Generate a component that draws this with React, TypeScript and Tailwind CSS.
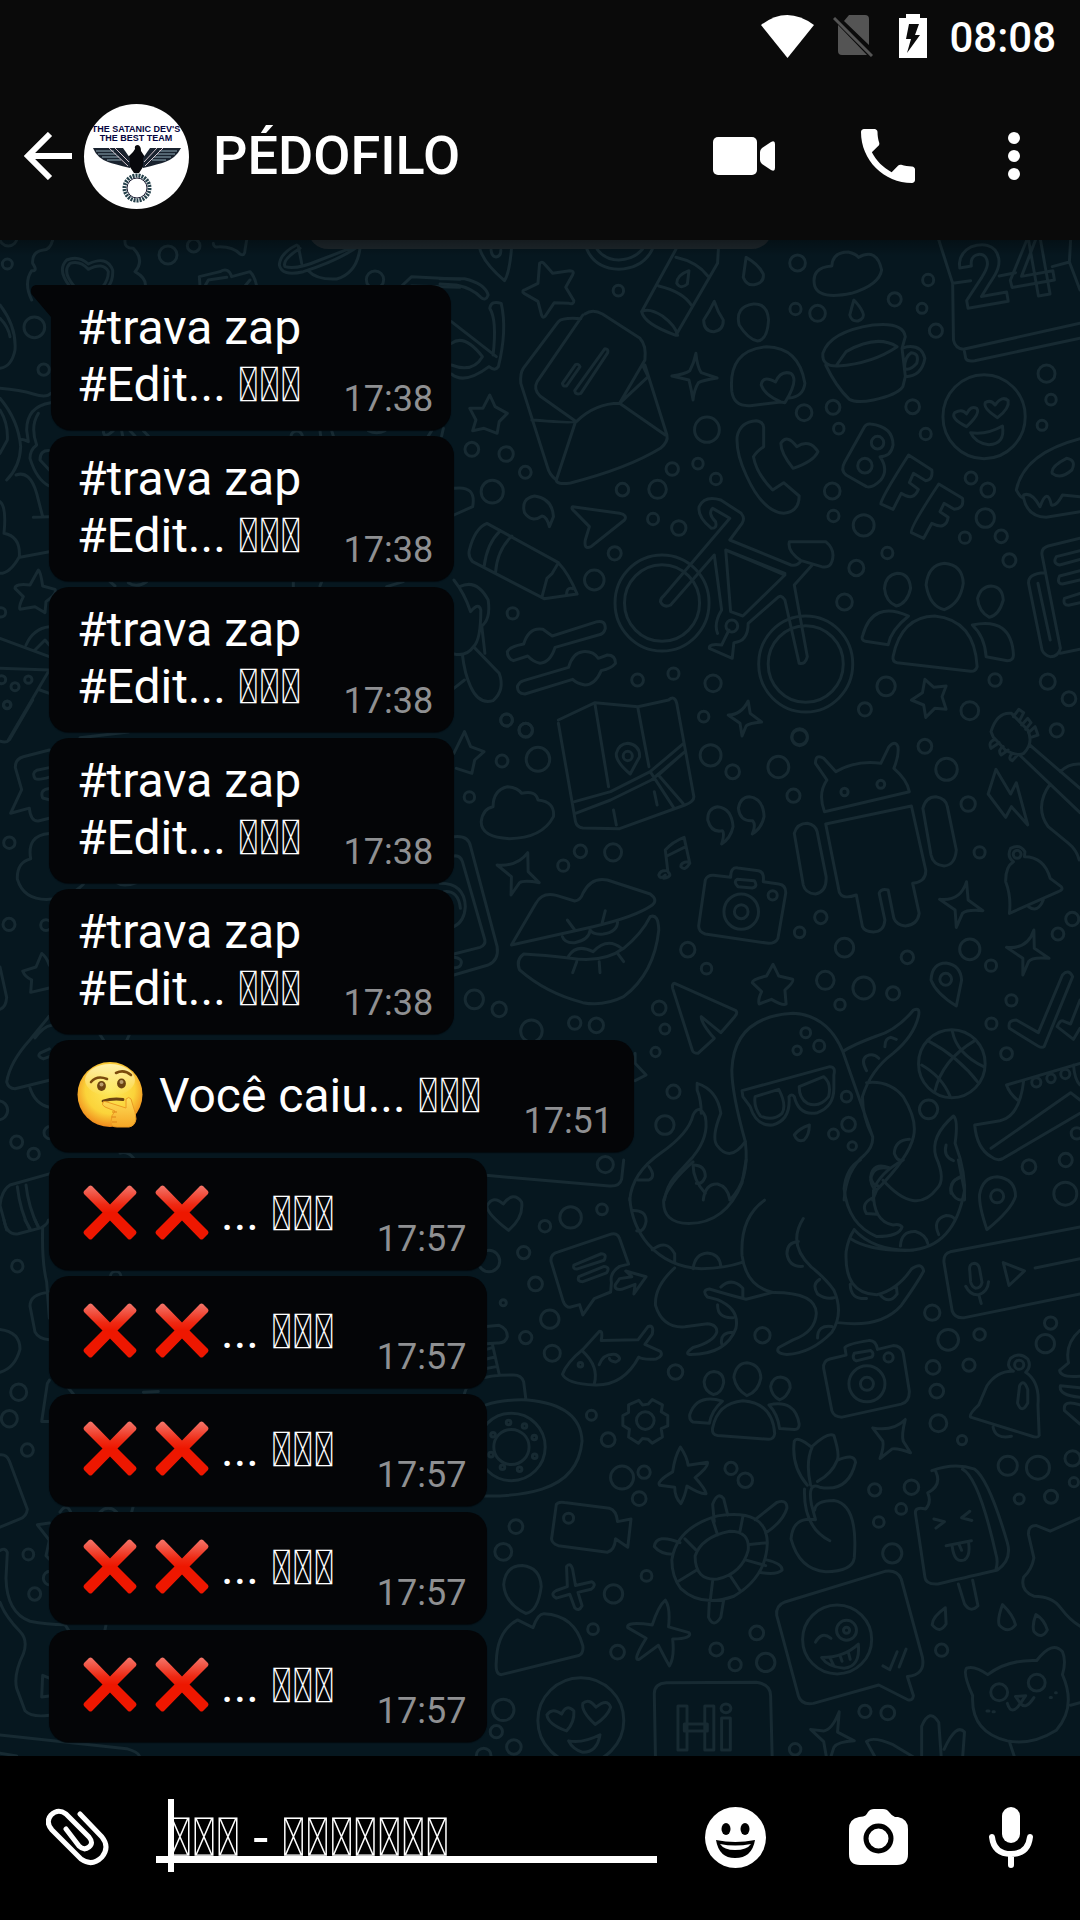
import React from 'react';

const BOX = '\ue000';
const BOX3 = BOX.repeat(3);

/* ---------- Icons ---------- */

function ThinkingFace() {
  return (
    <svg viewBox="0 0 66 66" className="h-[66px] w-[66px] shrink-0" role="img" aria-label="🤔">
      <defs>
        <radialGradient id="face" cx="50%" cy="42%" r="58%">
          <stop offset="0" stopColor="#fde95a" />
          <stop offset="0.65" stopColor="#fbd33a" />
          <stop offset="1" stopColor="#f08a1c" />
        </radialGradient>
        <linearGradient id="shine" x1="0" y1="0" x2="0" y2="1">
          <stop offset="0" stopColor="#fff3b0" stopOpacity="0.95" />
          <stop offset="1" stopColor="#fff3b0" stopOpacity="0" />
        </linearGradient>
        <linearGradient id="hand" x1="0" y1="0" x2="0" y2="1">
          <stop offset="0" stopColor="#fee05a" />
          <stop offset="1" stopColor="#f6a726" />
        </linearGradient>
      </defs>
      <circle cx="33" cy="32.500" r="32.500" fill="url(#face)" />
      <ellipse cx="33" cy="18" rx="25" ry="16" fill="url(#shine)" />
      <path d="M14 20 Q20 13 30 17" fill="none" stroke="#7a4a0c" strokeWidth="2.600" strokeLinecap="round" />
      <path d="M39 11 Q47 7 54 13" fill="none" stroke="#7a4a0c" strokeWidth="2.600" strokeLinecap="round" />
      <ellipse cx="24.500" cy="24" rx="4.400" ry="5" fill="#6b4210" />
      <ellipse cx="44.500" cy="21.500" rx="4.400" ry="5" fill="#6b4210" />
      <circle cx="24.500" cy="22.500" r="2" fill="#b89a6c" />
      <circle cx="44.500" cy="20" r="2" fill="#b89a6c" />
      <path d="M26 39 Q36 36 46 37.500" fill="none" stroke="#6b4210" strokeWidth="2.800" strokeLinecap="round" />
      <path
        d="M26 40 Q24 43 28 45 L38 49 Q34 53 34 60 Q34 65 40 65 L52 65 Q58 64 59 57 L58 50 Q56 44 54 37 Q52 34 49 37 L49 46 L30 40 Q27 39 26 40 Z"
        fill="url(#hand)"
        stroke="#ec9a22"
        strokeWidth="1"
      />
      <path d="M35 50 H40 M34.500 55 H39 M35 60 H40" stroke="#dd8418" strokeWidth="1.200" />
    </svg>
  );
}

function CrossMark() {
  return (
    <svg viewBox="0 0 66 66" className="h-[66px] w-[66px] shrink-0" role="img" aria-label="❌">
      <defs>
        <linearGradient id="cross" x1="0" y1="0" x2="0" y2="1">
          <stop offset="0" stopColor="#f4766a" />
          <stop offset="0.35" stopColor="#ee2a14" />
          <stop offset="0.5" stopColor="#ee1700" />
          <stop offset="1" stopColor="#ee1700" />
        </linearGradient>
      </defs>
      <path
        d="M12 6 Q13.500 5 15 6 L33 24.500 L51 6 Q52.500 5 54 6 L59 11 Q60 12.500 59 14 L40.500 32.500 L59 51 Q60 52.500 59 54 L54 59 Q52.500 60 51 59 L33 40.500 L15 59 Q13.500 60 12 59 L7 54 Q6 52.500 7 51 L25.500 32.500 L7 14 Q6 12.500 7 11 Z"
        fill="url(#cross)"
      />
    </svg>
  );
}

function Avatar() {
  return (
    <svg viewBox="0 0 105 105" className="h-[105px] w-[105px] shrink-0 rounded-full bg-white" role="img" aria-label="Foto do perfil">
      <g fontFamily="'Liberation Sans', sans-serif" fontWeight="700" textAnchor="middle" fill="#050540">
        <text x="52" y="28" fontSize="9">THE SATANIC DEV'S</text>
        <text x="52" y="37" fontSize="9">THE BEST TEAM</text>
      </g>
      <path d="M51 45 Q50 41 54 41 Q57 42 57 47 L61 53 L59 63 L55 69 H50 L46 63 L44 53 L49 48 Z" fill="#08080c" />
      <path d="M9 44 H39 L46 54 L46 64 Q30 60 24 58 Q13 54 9 44 Z" fill="#19222e" />
      <path d="M97 44 H66 L59 54 L59 64 Q75 60 81 58 Q92 54 97 44 Z" fill="#19222e" />
      <path d="M12 47 H30 M14 50 H32 M18 53 H35 M23 56 H37 M93 47 H75 M91 50 H73 M87 53 H70 M82 56 H68" stroke="#8fa9b5" strokeWidth="1" />
      <path d="M25 44 L44 62 M31 44 L45 58 M79 44 L61 62 M73 44 L60 58" stroke="#d6c6cf" strokeWidth="1" />
      <circle cx="53" cy="84" r="12.500" fill="none" stroke="#24404a" strokeWidth="4" strokeDasharray="2 1" />
      <circle cx="53" cy="84" r="10" fill="none" stroke="#1a1a30" strokeWidth="1" />
    </svg>
  );
}

/* ---------- Wallpaper ---------- */

type Dot = [number, number, number];

function Dots({ items, ratio }: { items: Dot[]; ratio: number }) {
  return (
    <>
      {items.map(([x, y, r], i) => (
        <ellipse key={i} cx={x} cy={y} rx={r * ratio} ry={r} vectorEffect="non-scaling-stroke" />
      ))}
    </>
  );
}

function Lines({ items }: { items: string[] }) {
  return (
    <>
      {items.map((d, i) => (
        <path key={i} d={d} vectorEffect="non-scaling-stroke" />
      ))}
    </>
  );
}

const upperDots: Dot[] = [
  [876, 69, 24], [437, 152, 16], [1196, 120, 17], [1114, 178, 20], [1181, 205, 15], [871, 207, 17], [925, 220, 24],
  [1215, 272, 20], [1486, 401, 26], [1497, 479, 16], [1475, 556, 15], [1158, 500, 21], [1190, 582, 17], [963, 502, 21],
  [892, 518, 24], [977, 566, 16], [654, 569, 38], [569, 687, 19], [632, 671, 16], [676, 717, 17], [447, 749, 19],
  [533, 748, 27], [209, 697, 18], [162, 642, 22], [78, 628, 21], [128, 755, 34], [961, 753, 24], [964, 828, 17],
  [1038, 856, 32], [1301, 714, 18], [1342, 750, 21], [1336, 834, 28], [1286, 893, 17], [1375, 889, 19], [1395, 961, 20],
  [1096, 939, 17], [1020, 984, 23], [991, 1086, 24], [522, 837, 17], [585, 864, 22], [428, 940, 20], [378, 1020, 30],
  [178, 1120, 17], [484, 1320, 18], [572, 1301, 17], [669, 1330, 25], [1093, 1339, 28], [1041, 1408, 20], [1360, 1320, 19],
  [1489, 1325, 23], [1541, 1376, 21], [1298, 1412, 27], [163, 1440, 18], [210, 1470, 20], [646, 1430, 16], [1511, 1471, 20],
  [1333, 530, 126], [544, 1089, 144], [544, 1089, 115], [896, 1272, 144], [896, 1272, 115], [1072, 608, 19], [1041, 677, 22],
  [881, 1490, 24], [715, 1158, 18],
];

const upperLines: string[] = [
  'M244 70 Q250 62 256 72 L276 100 L318 92 Q330 92 325 104 L308 142 L328 182 Q328 194 316 190 L280 188 L258 228 Q252 236 249 226 L240 184 L206 160 Q198 152 210 148 L240 130 Z',
  'M98 28 Q108 70 158 122 Q170 100 175 28 M125 30 Q127 50 137 51 Q150 48 149 30',
  'M360 28 Q380 85 438 88 Q498 84 520 28 M385 28 Q405 60 438 60 Q475 58 496 28',
  'M578 28 L494 215 Q500 252 578 286 L680 70 L682 28 M578 52 Q630 66 656 108 M536 138 Q596 156 616 196 M494 215 Q512 202 545 228 Q578 258 582 286 M610 92 Q580 105 580 130 Q590 150 606 132 Z',
  'M750 52 Q745 95 743 112 Q752 138 770 134 Q795 128 792 102 Q780 72 750 52 Z',
  'M672 184 Q660 215 646 240 Q646 274 671 275 Q695 270 694 240 Q680 215 672 184 Z',
  'M1014 180 Q1008 205 1004 225 Q1008 245 1024 243 Q1042 234 1036 218 Q1030 200 1014 180 Z',
  'M768 192 Q802 190 805 240 Q802 300 778 303 Q755 298 733 255 Q722 200 768 192 Z',
  'M960 78 Q962 36 1000 36 Q1020 42 1025 52 Q1070 22 1082 90 Q1076 135 1008 160 Q930 180 918 138 Q908 82 960 78 Z',
  'M285 720 Q268 705 263 680 L198 430 Q196 400 204 385 L290 245 Q300 232 345 236 M355 222 Q374 205 398 222 L490 295 Q506 315 502 360 L440 490 Q380 490 334 545 L245 468 Q228 448 238 425 L350 225 M502 375 L556 585 Q560 605 540 625 Q460 685 320 729 Q285 735 285 720 L332 545 Q330 550 225 540 M440 490 L552 585 M498 380 L510 410 L440 490',
  'M332 374 Q340 370 343 380 L310 438 Q300 440 300 430 Z M404 326 Q413 326 411 338 L345 460 Q332 466 330 452 Z',
  'M627 340 Q630 380 640 398 L679 414 Q640 422 633 428 Q622 450 620 480 Q616 450 610 420 L568 408 Q600 402 612 392 Q622 370 627 340 Z',
  'M835 486 L760 497 Q720 500 715 455 Q705 330 800 320 Q880 322 894 430 Q890 470 855 474 M835 486 Q795 465 787 435 Q790 405 822 426 Q835 390 860 400 Q880 420 845 488 Z',
  'M938 340 Q955 275 1060 255 Q1135 245 1140 290 L1132 325 M938 340 Q935 380 975 378 Q1060 370 1120 320 Q1070 282 995 335 L970 378 M945 375 Q970 440 1003 478 Q1020 490 1062 480 Q1120 465 1134 440 L1140 410 Q1180 410 1188 355 Q1180 315 1145 320 L1132 325 L1140 408 M1155 338 Q1175 340 1168 370 Q1150 395 1138 385 Q1138 350 1155 338 Z',
  'M1222 0 L1256 130 L1258 300 Q1262 325 1282 328 L1568 250 M1285 335 L1288 355 Q1292 366 1310 362 L1568 295 M1256 130 L1300 122 M1370 108 L1410 98 M1500 80 L1542 66 L1545 0 M1542 66 L1568 150',
  'M1290 560 Q1250 535 1261 518 Q1280 505 1290 522 Q1300 495 1315 505 Q1325 520 1290 560 Z M1366 533 Q1330 505 1336 488 Q1350 478 1360 495 Q1378 465 1392 482 Q1396 505 1366 533 Z M1300 578 Q1340 585 1378 558 Q1385 612 1345 614 Q1312 610 1300 578 Z',
  'M728 590 Q735 545 775 542 Q792 545 793 562 L793 620 Q775 635 768 650 Q775 700 815 750 L842 728 L880 768 Q880 815 842 820 Q790 815 750 705 Q725 640 728 590 Z',
  'M865 685 Q835 640 835 610 Q850 580 874 620 Q905 595 926 635 Q915 665 865 685 Z',
  'M1055 552 Q1110 560 1110 615 Q1105 650 1078 650 Q1100 690 1080 720 Q1060 745 1045 740 L995 705 Q980 690 992 665 L1040 560 Q1045 550 1055 552 Z',
  'M1148 645 L1205 690 Q1208 720 1190 722 L1160 700 L1150 728 L1172 748 Q1160 785 1130 760 L1110 808 L1080 792 Q1080 775 1148 645 Z M1222 732 L1280 775 Q1285 805 1260 808 L1235 790 L1225 815 L1245 832 Q1240 872 1205 850 L1185 895 L1155 878 Q1150 865 1222 732 Z',
  'M1568 596 Q1430 640 1412 750 Q1428 785 1430 765 Q1450 755 1470 800 Q1488 740 1498 795 Q1510 800 1525 765 L1568 770 M1430 775 Q1440 830 1485 832 L1568 815 M1535 655 Q1560 660 1548 690 Q1520 720 1500 700 Q1495 680 1535 655 Z',
  'M232 768 Q275 775 278 830 L268 860 Q262 830 250 828 Q225 850 207 818 Q198 775 232 768 Z',
  'M325 800 L440 820 Q460 825 452 840 L370 920 Q352 930 356 900 L366 860 L330 815 Q320 805 325 800 Z',
  'M115 850 L290 968 Q315 1000 336 1062 L255 1076 L80 965 Q68 950 72 930 Q85 865 115 850 Z M148 872 Q115 910 108 980 M176 888 Q140 930 136 998 M290 968 L275 1000 L262 1015 L250 1070 M310 1066 Q310 1040 325 1046',
  'M565 1095 Q548 1105 540 1085 Q540 1075 550 1065 L710 835 Q690 820 668 805 Q655 820 675 845 Q680 865 665 865 Q630 830 635 800 Q648 765 688 780 L738 820 Q748 835 740 850 L710 900 L860 975 Q875 980 885 962 M565 1095 L672 945 L690 1110 Q670 1150 680 1180 M700 930 L712 1115 L742 1128 L845 1005 Z M700 930 L845 1000 M885 962 Q850 935 856 905 L945 905 Q970 930 960 965 Q955 985 935 980 L885 962 M912 975 L868 1035 L900 1250 Q895 1275 880 1270 L845 1080 Q835 1060 825 1075 L755 1150 Q755 1205 720 1208 L716 1255 L660 1225 Q658 1210 690 1215 L708 1170',
  'M180 1262 Q165 1255 165 1235 Q170 1220 205 1212 Q218 1160 252 1168 L275 1188 L385 1145 Q405 1140 405 1165 Q402 1182 388 1185 L282 1222 Q270 1268 245 1270 Q228 1265 215 1248 Z M208 1362 Q188 1360 190 1338 Q195 1325 205 1322 L315 1282 Q325 1238 350 1235 Q375 1232 388 1255 L410 1245 Q430 1245 430 1270 Q420 1285 395 1292 Q380 1335 355 1335 Q335 1330 325 1318 Z',
  'M1120 1000 Q1150 1000 1153 1045 Q1145 1090 1118 1098 Q1092 1085 1089 1045 Q1092 1005 1120 1000 Z M1236 970 Q1280 975 1282 1030 Q1275 1090 1236 1109 Q1200 1100 1191 1035 Q1196 975 1236 970 Z M1350 1038 Q1378 1040 1380 1080 Q1370 1125 1346 1132 Q1320 1115 1317 1075 Q1325 1040 1350 1038 Z',
  'M1110 1250 Q1130 1130 1212 1128 Q1310 1140 1316 1280 Q1312 1295 1300 1294 L1120 1268 Q1108 1265 1110 1250 Z M1098 1214 L1042 1204 Q1030 1200 1036 1185 Q1060 1080 1148 1128 Q1105 1170 1098 1214 Z M1304 1155 Q1400 1130 1405 1245 Q1405 1262 1390 1262 L1338 1250 Q1335 1190 1304 1155 Z',
  'M1568 895 L1490 918 Q1472 925 1475 945 L1520 1225 Q1515 1250 1495 1250 Q1480 1245 1475 1230 L1442 1030 Q1440 1000 1482 998 M1520 1240 L1568 1228 M1568 932 L1510 950 Q1500 970 1518 975 L1568 958 M1568 992 L1518 1008 Q1510 1030 1525 1032 L1568 1020 M1568 1060 L1530 1075 Q1525 1095 1540 1096 L1568 1088 M1465 1030 L1495 1200',
  'M1188 1318 L1210 1342 L1240 1338 L1230 1370 L1240 1408 L1212 1405 L1190 1432 L1185 1395 L1155 1380 L1182 1358 Z',
  'M755 1383 L760 1420 L788 1446 Q755 1450 750 1458 L740 1488 L735 1450 L706 1425 Q738 1425 755 1383 Z',
  'M34 1020 Q60 1060 75 1115 Q95 1085 100 1110 Q100 1200 82 1220 Q66 1250 34 1242 M48 1040 Q90 1015 118 1080 Q125 1140 100 1160 M82 1220 L145 1300 Q160 1350 130 1382 Q95 1395 75 1340 Q60 1300 55 1245 M102 1155 L110 1240 M60 1320 L34 1345',
  'M0 116 L60 116 Q110 130 118 165 Q112 185 100 172 Q80 145 40 135 L0 132 M122 205 Q125 180 150 190 Q165 270 143 380 Q135 395 120 380 Q60 435 28 402 M28 245 L138 350 M122 205 Q140 240 130 345 M28 310 Q60 280 104 350 Q80 400 28 375',
  'M122 465 L135 500 L165 520 L145 545 L140 580 L108 565 L80 572 L88 540 L73 505 L105 505 Z M34 745 Q90 735 80 800 L34 825',
];

const middleDots: Dot[] = [
  [163, 60, 18], [210, 91, 21], [152, 183, 18], [240, 178, 36], [72, 291, 16], [344, 454, 19], [424, 457, 26], [302, 497, 17],
  [663, 166, 32], [717, 215, 21], [829, 201, 32], [881, 113, 24], [1188, 139, 21], [1241, 208, 33], [866, 287, 20],
  [1294, 312, 22], [1322, 457, 17], [933, 652, 19], [881, 697, 16], [991, 743, 28], [607, 749, 22], [653, 806, 16],
  [1145, 772, 19], [1298, 748, 31], [1350, 797, 17], [1514, 702, 18], [1549, 657, 20], [944, 841, 27], [1038, 864, 33],
  [1110, 880, 20], [980, 914, 16], [1400, 901, 17], [1351, 971, 17], [1388, 1061, 18], [537, 924, 21], [551, 987, 15],
  [528, 1056, 14], [330, 969, 19], [383, 976, 22], [224, 993, 33], [145, 928, 22], [84, 898, 28], [896, 998, 15],
  [929, 1038, 17], [875, 1051, 13], [572, 1175, 20], [551, 1275, 28], [996, 1190, 16], [1001, 1273, 21], [964, 1302, 15],
  [1010, 1338, 13], [1197, 1228, 28], [1443, 1400, 21], [1533, 1380, 20], [1461, 1147, 14], [1497, 1135, 13],
  [1532, 1122, 14], [1560, 1300, 17], [460, 168, 14], [991, 276, 11], [1080, 253, 12], [815, 586, 14], [738, 635, 53],
  [738, 635, 21], [1239, 838, 18], [1254, 1091, 102], [1414, 463, 12],
];

const middleLines: string[] = [
  'M290 60 L380 8 L485 20 L560 0 Q575 -15 580 10 L622 290 Q622 305 600 315 L440 386 L350 384 Q335 382 332 365 L290 70 M330 305 L418 275 L515 215 L597 130 M332 340 L418 300 L518 240 L600 155 M515 215 L572 322 M535 225 L595 310 M535 225 L600 155',
  'M380 15 L413 260 M425 330 L432 375 M485 25 L512 200 M525 275 L532 315',
  'M460 130 Q490 135 489 170 L466 222 Q430 185 432 160 Q438 132 460 130 Z',
  'M130 320 Q130 270 165 260 Q190 262 200 280 Q235 270 240 300 Q282 305 278 350 Q250 415 170 416 Q100 412 101 365 Q105 325 130 320 Z',
  'M34 160 L60 95 L75 140 L108 155 L85 180 L78 220 L40 205',
  'M215 458 L216 515 L243 548 Q205 540 195 548 L174 585 L175 530 L140 495 Q190 500 215 458 Z M1290 545 L1294 600 L1330 632 Q1290 628 1280 640 L1265 682 L1262 630 L1224 598 Q1275 605 1290 545 Z M1455 690 L1456 745 L1492 775 Q1450 770 1442 785 L1428 825 L1428 775 L1388 742 Q1440 748 1455 690 Z',
  'M552 525 Q540 540 536 525 Q540 510 558 512 L552 450 Q570 425 598 412 L612 490 Q600 515 590 500 Q590 485 608 485 M558 515 Q572 530 548 535 M556 468 L602 440',
  'M680 320 Q715 325 718 380 Q712 415 690 432 Q698 400 692 392 Q665 400 656 360 Q655 325 680 320 Z M758 290 Q792 295 794 350 Q788 385 765 402 Q775 375 766 362 Q735 365 731 325 Q735 292 758 290 Z',
  'M650 540 Q655 525 670 526 L712 532 Q712 500 730 504 L780 512 Q795 515 792 545 L830 552 Q848 555 847 580 L828 715 Q822 730 805 730 L650 702 Q632 695 634 675 Z M728 538 L770 542 Q780 560 765 564 L730 560 Q718 545 728 538 Z',
  'M175 735 L235 610 Q250 575 285 586 L330 603 Q345 600 350 580 Q370 530 410 540 L515 582 Q535 600 520 615 Q480 650 375 680 Z M300 710 Q305 730 330 728 Q365 720 368 690 Q375 705 400 702 Q435 695 435 665 M312 660 L330 690 M405 632 L397 670 M205 762 Q255 765 320 775 Q400 790 450 745 Q495 700 515 650 Q535 640 536 690 Q525 820 450 890 Q400 920 350 908 Q260 880 195 810 Q185 780 205 762 Z M315 768 Q335 730 375 755 Q410 710 445 745 M325 818 L335 785 M392 818 L390 785 M450 785 L435 760',
  'M942 335 Q925 280 948 240 L920 190 Q920 160 940 175 L970 215 Q1020 180 1080 190 L1100 140 Q1115 120 1122 140 Q1125 165 1112 205 Q1145 240 1150 275 Z M945 372 L1155 318 L1190 510 Q1192 545 1158 550 L1174 640 Q1170 675 1140 678 Q1118 675 1112 655 L1098 570 Q1080 565 1076 580 L1090 660 Q1088 695 1062 696 Q1040 695 1035 680 L1020 585 Q985 600 978 575 Z M868 400 Q875 370 900 370 Q920 375 924 395 L946 530 Q948 575 920 582 Q895 580 890 555 Z M1183 325 Q1190 290 1215 290 Q1240 295 1243 320 L1265 450 Q1262 495 1235 498 Q1208 495 1203 465 Z',
  'M1362 208 L1343 282 L1386 352 L1400 320 L1440 375 L1412 248 L1398 282 Z',
  'M1350 95 Q1365 35 1400 40 L1440 90 Q1455 130 1430 160 Q1415 170 1385 150 L1355 110 Z M1405 50 L1418 28 L1430 38 L1420 62 M1425 75 L1440 55 L1448 68 L1435 88 M1442 98 L1458 80 L1465 105 L1448 112 M1360 118 Q1342 125 1350 145 L1370 128 M1380 140 Q1365 150 1375 165 L1392 150 M1402 160 Q1390 175 1402 182 L1415 165 M1420 165 L1568 338 M1445 135 L1568 265 M1495 252 Q1455 320 1490 380 L1540 430 Q1560 450 1566 480 M1520 215 Q1540 190 1568 192',
  'M1405 485 Q1388 470 1398 445 Q1420 430 1433 455 L1432 470 Q1480 470 1495 535 L1522 560 Q1528 570 1515 575 L1395 640 Q1400 590 1386 545 Q1385 500 1405 485 Z M1442 620 Q1465 640 1478 600',
  'M34 410 Q70 405 75 440 L140 740 Q145 780 118 795 L34 825 M34 468 Q50 465 55 485 L110 720 Q112 735 98 742 L34 762 M0 550 Q60 550 62 620 Q60 665 34 680 M10 575 Q45 570 50 625 M34 772 Q55 775 52 790 Q50 805 34 803',
  'M575 850 L725 932 Q730 940 722 950 L688 998 Q670 980 640 950 Q640 970 672 1015 L632 1060 Q620 1060 618 1050 L570 865 Q568 850 575 850 Z',
  'M816 793 Q825 815 830 828 L864 838 Q868 845 845 870 L848 912 Q840 918 812 898 L782 912 Q778 900 788 875 L765 848 Q765 838 800 828 Z',
  'M1265 918 Q1215 880 1203 840 Q1205 790 1240 789 Q1275 795 1278 840 Z',
  'M1395 985 Q1390 960 1412 960 L1466 998 L1525 825 Q1540 805 1550 830 L1480 1040 Q1475 1045 1465 1038 Z M1512 980 Q1520 955 1530 965 L1545 972 L1568 900 M1512 980 L1552 1018 L1568 985',
  'M748 1325 Q715 1180 715 1110 Q720 950 865 940 Q950 945 987 1055 L1060 1310 Q1062 1340 1040 1365 Q995 1410 990 1500 M987 1055 Q1010 1035 1070 1008 Q1120 990 1160 930 Q1178 920 1172 950 Q1160 1010 1110 1060 Q1055 1110 1035 1190 Q1035 1250 1060 1310 M1045 1112 Q1030 1080 1045 1068 Q1062 1058 1075 1075 M1090 1040 Q1090 1015 1105 1012 L1118 1018 M1045 1148 Q1100 1140 1135 1190 Q1170 1260 1160 1310 Q1150 1370 1070 1470 L1060 1500',
  'M740 1172 L955 1100 Q970 1100 965 1125 L965 1165 Q965 1220 925 1238 Q880 1250 868 1190 Q862 1180 855 1190 Q860 1260 815 1275 Q775 1280 760 1220 L742 1190 Z M772 1190 L830 1168 Q850 1215 838 1240 Q815 1265 785 1248 Q768 1220 772 1190 Z M880 1160 L940 1130 Q960 1150 952 1190 Q930 1225 900 1210 Q880 1195 880 1160 Z',
  'M905 1275 Q905 1305 892 1320 Q875 1328 868 1305 Q880 1285 905 1275 Z',
  'M465 1500 Q470 1420 540 1360 Q610 1300 620 1245 Q635 1210 650 1250 Q660 1310 620 1370 L575 1430 Q555 1460 550 1500 M630 1150 Q680 1170 688 1240 Q665 1310 678 1335 Q710 1390 748 1325 Q760 1440 710 1500 M640 1240 Q640 1200 630 1170 L630 1150 M512 1400 Q530 1430 512 1440 L485 1440 M620 1395 Q650 1395 650 1430 Q642 1455 628 1450 M645 1500 Q650 1450 680 1452 Q705 1460 710 1498 M620 1395 Q620 1440 650 1480',
  'M1085 1440 Q1165 1550 1218 1465 Q1240 1440 1215 1370 Q1200 1310 1258 1248 Q1270 1260 1262 1330 Q1290 1420 1285 1500 M1240 1335 Q1232 1370 1258 1382 M1150 1318 Q1115 1320 1113 1360 Q1120 1385 1132 1380 M1100 1405 Q1060 1395 1055 1440 Q1060 1470 1070 1468 M1275 1430 Q1248 1445 1252 1480',
  'M1195 1022 Q1270 1070 1320 1150 M1255 992 Q1265 1060 1332 1100 M1180 1095 Q1230 1130 1250 1190 M1310 1022 Q1230 1080 1212 1175',
  'M1388 1155 L1568 1090 M1388 1155 Q1395 1180 1415 1200 M1430 1142 Q1420 1250 1372 1262 L1310 1275 Q1315 1345 1350 1370 Q1365 1385 1380 1375 L1568 1240 M1350 1345 L1545 1178 L1568 1200 M1552 1095 Q1555 1140 1568 1155',
  'M478 1060 L478 1090 L505 1125 L478 1142',
];

const lowerDots: Dot[] = [
  [320, 150, 28], [397, 129, 14], [257, 173, 15], [205, 242, 16], [120, 264, 28], [234, 324, 18], [269, 416, 24], [155, 373, 8],
  [210, 464, 16], [275, 505, 21], [577, 554, 19], [371, 667, 13], [412, 731, 18], [446, 830, 30], [500, 816, 16],
  [488, 885, 18], [713, 806, 16], [748, 837, 19], [790, 458, 20], [186, 958, 18], [155, 1024, 22], [506, 1087, 14],
  [425, 1134, 24], [375, 1226, 14], [435, 1286, 18], [677, 1279, 17], [723, 1319, 16], [776, 1236, 18], [798, 1313, 24],
  [1206, 399, 20], [1245, 470, 27], [1322, 456, 15], [1208, 542, 18], [1296, 536, 16], [1217, 604, 18], [1221, 688, 22],
  [1279, 732, 12], [1483, 480, 24], [1496, 426, 16], [1391, 799, 25], [1465, 804, 30], [1550, 780, 20], [1419, 886, 13],
  [1497, 880, 17], [1553, 842, 12], [1155, 855, 19], [1065, 862, 16], [1130, 912, 14], [1075, 946, 14], [1108, 1028, 25],
  [1229, 1281, 16], [1041, 1441, 16], [1097, 1445, 18], [870, 1540, 15], [155, 1437, 28], [138, 1494, 16], [181, 1534, 19],
  [1532, 88, 30], [1365, 95, 17], [405, 12, 21], [315, 936, 13], [503, 681, 23], [175, 750, 88],
  [175, 750, 46], [345, 1465, 112], [973, 1253, 90], [996, 1229, 26], [996, 1229, 8], [1046, 585, 47], [1046, 585, 17],
  [1099, 516, 12], [344, 535, 6], [1370, 1391, 22], [1462, 1366, 22], [1419, 535, 12], [107, 1556, 19],
  [168, 686, 6], [207, 695, 6], [231, 725, 6], [232, 774, 6], [195, 808, 6], [153, 803, 6], [125, 770, 6], [130, 718, 6],
];

const lowerLines: string[] = [
  'M113 40 L415 68 Q440 70 445 50 L450 0 M168 184 Q115 140 115 120 Q130 90 155 115 Q180 80 200 110 Q205 150 168 184 Z',
  'M465 100 Q470 170 510 220 Q560 280 640 284 Q700 282 738 268 M548 105 Q545 165 610 166 Q700 165 740 60 L750 0 M548 105 Q560 60 620 5 M470 132 Q505 130 505 160 Q500 190 482 185 M520 235 Q555 205 575 245 L575 270 M620 284 Q625 245 655 243 Q685 245 688 278 M795 105 Q735 150 740 250 Q750 330 815 346 Q920 345 922 400 Q920 450 865 470 L830 490 Q820 505 850 508 Q910 505 960 450 Q990 400 965 340 Q945 310 910 280 Q850 220 890 153 M878 213 Q850 215 850 245 Q855 280 888 278 M930 312 Q910 325 925 350 Q945 365 965 360 M925 465 Q925 430 960 435 M975 425 Q1080 440 1130 380 Q1170 320 1185 290 Q1180 265 1155 285 Q1120 340 1070 352 Q990 350 995 240 Q1000 205 1015 182 M1005 325 Q1005 365 1045 362 M1078 352 Q1100 380 1120 350 L1118 330',
  'M575 282 Q525 330 528 380 Q545 440 600 436 L655 428 Q680 430 678 450 Q670 475 620 490 Q600 505 610 508 Q700 510 725 440 Q735 390 680 365 L655 358 Q640 340 660 337 Q700 350 750 364 L815 346 M688 332 Q715 305 742 335 L742 360 M680 378 Q680 415 718 412 M690 480 Q685 450 720 450',
  'M990 75 Q995 20 1030 0 M990 75 Q1000 170 1070 200 Q1125 200 1132 175 Q1125 165 1110 170 Q1060 160 1062 80 Q1075 35 1135 0 M1015 182 Q1060 235 1150 236 Q1260 230 1285 80 L1270 0 M1005 205 Q1055 240 1160 236 M1058 100 Q1030 115 1045 140 L1070 142 M1128 225 Q1130 185 1165 187 Q1190 195 1195 218 M1222 195 Q1205 155 1240 145 Q1255 145 1262 155 M1280 45 Q1250 50 1252 80 Q1260 105 1280 105 M1100 20 Q1060 5 1055 45 Q1060 68 1075 68',
  'M1340 182 Q1320 120 1322 90 Q1330 45 1365 44 Q1410 50 1410 95 Q1400 130 1340 182 Z',
  'M1568 175 L1250 240 Q1232 245 1235 270 L1255 395 Q1262 415 1285 412 L1568 350 M1298 290 Q1295 270 1310 270 Q1320 272 1322 285 L1328 320 Q1325 335 1312 335 Q1302 330 1300 318 Z M1288 330 Q1300 355 1320 352 Q1342 345 1344 318 M1320 352 L1326 375 M1380 268 L1432 290 L1394 328 Z M1458 282 L1568 258',
  'M272 265 Q270 245 290 240 L415 195 Q435 188 440 205 L462 272 L440 278 Q415 295 420 320 L418 345 L378 362 L350 405 L342 378 L318 385 Q308 385 302 370 Z M328 275 L395 245 Q410 245 402 262 L335 285 Q325 285 328 275 Z M340 305 L402 278 Q418 280 408 295 L350 318 Q335 318 340 305 Z M440 310 L470 305 L455 290 L505 305 L475 350 L478 325 L445 338 Q425 340 430 325 Z',
  'M300 560 Q310 530 350 495 L390 448 Q400 445 395 472 L485 470 L510 435 Q525 430 520 455 L502 482 L540 500 Q548 512 530 520 Q495 522 487 515 Q450 590 380 588 Q310 585 300 560 Z M350 500 Q390 540 378 585 M390 535 Q400 505 430 508 Q450 520 430 528 Q415 525 415 518',
  'M113 435 L145 432 Q165 440 165 462 Q160 480 140 478 L113 480 M128 480 L145 560 M113 495 L130 490 M113 520 L135 515 M113 545 L138 540 M60 610 Q70 560 180 562 Q200 562 205 580 L210 622 M113 640 Q150 625 215 627 Q345 640 348 735 Q340 830 250 860 Q190 880 105 878',
  'M487 628 L496 640 L510 638 L520 626 L545 640 L542 658 L558 668 L558 695 L542 702 L545 724 L520 740 L510 730 L496 728 L486 740 L462 724 L464 704 L448 694 L448 668 L462 660 L462 640 Z',
  'M671 553 Q695 555 695 582 Q690 610 670 613 Q648 605 647 580 Q650 555 671 553 Z M752 530 Q785 535 786 570 Q780 605 752 616 Q725 600 720 568 Q725 532 752 530 Z M834 567 Q858 570 858 595 Q850 620 832 627 Q812 615 810 592 Q815 567 834 567 Z M668 700 Q680 635 742 629 Q815 635 820 715 Q818 730 805 730 L680 720 Q665 718 668 700 Z M660 688 L620 685 Q610 680 612 665 Q630 610 692 630 Q665 655 660 688 Z M806 640 Q870 625 880 690 Q880 705 868 704 L832 702 Q828 665 806 640 Z',
  'M940 545 Q938 525 955 520 L995 510 L992 490 Q1000 480 1050 472 Q1068 470 1072 495 L1110 485 Q1130 485 1135 505 L1150 605 Q1150 632 1130 638 L985 672 Q965 672 960 655 Z M1015 505 L1055 498 Q1065 505 1058 515 L1020 525 Q1008 520 1015 505 Z',
  'M1140 678 Q1130 720 1135 735 L1153 765 Q1120 752 1108 755 L1078 780 Q1088 750 1085 735 L1060 700 Q1110 710 1140 678 Z',
  'M589 750 Q605 775 608 798 L655 790 Q660 800 625 830 Q650 860 652 872 Q640 875 605 852 Q600 880 590 898 Q575 880 575 855 L538 850 Q530 840 570 815 Q575 775 589 750 Z M552 1150 Q565 1170 560 1220 L610 1235 Q620 1250 570 1252 Q575 1300 562 1322 Q550 1300 535 1268 L488 1305 Q470 1310 505 1250 L460 1222 Q455 1205 520 1215 Q535 1165 552 1150 Z',
  'M672 945 L668 900 Q680 865 695 885 L705 928 M772 940 L825 895 Q850 885 850 910 Q840 945 798 975 M588 1000 Q530 975 525 1010 Q540 1030 570 1030 M800 1045 Q840 1055 838 1072 Q825 1085 785 1078 M660 1150 L658 1195 Q670 1225 688 1195 L695 1150 M568 1045 Q580 960 680 930 Q800 910 802 1000 Q800 1090 720 1140 Q640 1170 590 1120 Q568 1090 568 1045 Z M625 1035 Q640 985 710 970 Q760 970 755 1020 Q740 1080 680 1095 Q625 1100 625 1035 Z M668 940 L680 980 M742 932 L735 970 M802 1000 L758 1005 M798 1060 L748 1045 M735 1125 L710 1085 M662 1152 L668 1100 M582 1102 L628 1072 M600 990 L630 1022',
  'M285 900 Q290 892 305 895 L415 910 Q432 915 435 945 L468 938 L460 1012 L430 990 Q428 1020 410 1025 L290 1008 Q270 1000 274 985 Z',
  'M868 735 Q875 720 910 750 Q950 710 965 720 Q980 770 973 785 Q1015 765 1018 790 Q1000 870 930 855 Q900 840 910 900 L920 940 Q865 930 860 990 Q880 1070 945 1076 Q1010 1075 1015 1040 Q1025 900 965 890 Q920 890 918 915 M868 735 Q860 800 900 850 M912 750 Q895 790 908 850 M973 785 Q960 820 925 840 M893 860 Q890 960 955 995',
  'M202 1060 Q245 1065 248 1115 Q240 1180 210 1185 Q160 1160 156 1110 Q160 1060 202 1060 Z M150 1345 Q135 1345 138 1310 Q140 1230 190 1202 L228 1222 Q240 1185 255 1186 Q330 1190 350 1270 Q352 1290 340 1295 Z',
  'M310 1062 Q320 1050 325 1070 L332 1112 L372 1102 Q385 1110 370 1122 L338 1130 L348 1165 Q340 1182 330 1170 L318 1135 L285 1145 Q268 1135 285 1125 L312 1115 Z',
  'M1205 812 Q1260 790 1310 808 Q1345 835 1390 1000 Q1402 1045 1365 1072 Q1370 1070 1220 1108 Q1190 1110 1188 1090 L1165 925 Q1162 905 1190 912 Q1205 895 1195 870 Q1230 850 1215 815 M1280 808 Q1320 830 1362 1030 Q1368 1050 1362 1070 M1270 1108 L1285 1160 Q1300 1185 1318 1165 L1305 1098 M1210 938 L1236 945 L1215 962 M1298 918 L1278 935 L1303 942 M1240 1008 L1302 995 M1255 1010 Q1260 1055 1285 1045 Q1300 1035 1295 1000 M1272 1005 L1278 1020',
  'M825 1190 Q822 1165 845 1155 L1090 1075 Q1120 1070 1130 1095 L1182 1300 Q1190 1345 1145 1350 L1160 1400 Q1158 1415 1145 1410 L1075 1372 L915 1420 Q885 1425 878 1400 Z M920 1260 Q935 1230 958 1250 M935 1300 Q990 1300 1025 1265 Q1030 1325 990 1328 Q950 1325 935 1300 Z M955 1300 L965 1322 M980 1295 L985 1310 M1000 1285 L1005 1305 M1085 1322 L1102 1332 L1120 1285 M1125 1325 L1142 1278',
  'M1238 1170 Q1205 1195 1206 1215 Q1225 1240 1240 1212 Z M1378 1162 Q1365 1200 1370 1215 Q1392 1240 1410 1215 Q1405 1190 1378 1162 Z M1460 1188 Q1450 1215 1455 1232 Q1475 1255 1488 1228 Q1480 1200 1460 1188 Z',
  'M1568 935 L1495 970 L1460 955 Q1440 955 1442 980 L1455 1040 Q1450 1070 1430 1090 Q1420 1125 1455 1140 Q1500 1140 1520 1170 Q1545 1205 1568 1218',
  'M1405 552 Q1385 540 1398 518 Q1420 500 1440 520 Q1450 540 1435 555 Q1470 580 1465 640 L1468 720 Q1465 728 1445 720 L1300 672 Q1295 665 1320 640 L1340 590 Q1365 550 1405 552 Z M1355 698 Q1360 730 1400 722 M1420 590 Q1430 570 1440 600 L1440 635 Q1425 665 1415 635 Z M1568 445 Q1530 480 1540 530 L1518 550 Q1520 570 1568 565 M1568 595 L1520 590 Q1515 615 1568 620 M1568 640 Q1525 625 1530 655 L1568 690',
  'M1305 1400 Q1280 1340 1290 1328 Q1310 1320 1342 1345 Q1390 1305 1462 1308 Q1500 1255 1525 1285 Q1535 1310 1525 1345 Q1560 1430 1510 1490 Q1450 1530 1390 1518 Q1300 1495 1305 1400 Z M1395 1520 L1410 1568 M1410 1402 L1435 1400 L1422 1420 Z M1422 1420 Q1435 1438 1455 1405 M1422 1420 Q1400 1455 1390 1420 M1340 1440 L1345 1440 M1355 1442 L1358 1442 M1495 1405 L1498 1405 M1508 1392 L1510 1392 M1545 1425 L1568 1418',
  'M310 1492 Q265 1475 262 1450 Q275 1430 298 1448 Q310 1420 328 1440 Q330 1470 310 1492 Z M380 1475 Q345 1440 350 1420 Q365 1405 382 1430 Q410 1405 418 1430 Q410 1455 380 1475 Z M315 1518 Q350 1525 392 1502 Q385 1548 350 1548 Q325 1540 315 1518 Z',
  'M528 1568 L525 1395 Q525 1368 555 1366 L775 1365 Q810 1370 810 1400 L814 1568',
  'M978 1442 L974 1495 L1015 1518 Q975 1520 965 1535 L955 1568 M978 1442 Q960 1490 940 1492 L908 1488 L940 1520 L948 1568 M1045 1520 Q1060 1505 1110 1528 L1160 1560 M1045 1520 L1070 1568 M1180 1560 L1180 1480 Q1200 1430 1222 1470 L1228 1560 M1235 1540 Q1265 1470 1285 1495 L1280 1568',
];

const leftTopDots: Dot[] = [
  [22, 72, 15], [25, -8, 26], [504, 45, 27], [581, 17, 19], [1125, 119, 26], [103, 262, 31], [131, 389, 17], [890, 590, 17],
  [3, 1117, 14], [85, 1319, 11], [5, 1319, 12], [45, 1340, 12], [22, 1394, 11],
];

const leftTopLines: string[] = [
  'M158 0 Q150 30 130 30 Q95 35 98 70 Q115 95 95 92 Q70 130 95 180 M375 0 Q372 25 400 25 Q435 60 405 95 Q440 115 436 140 M210 140 Q170 90 200 60 Q235 45 265 72 Q320 45 338 90 Q340 120 325 140 M222 138 Q185 95 210 70 Q240 60 265 88 Q310 65 325 95 Q325 120 308 140',
  'M640 10 Q640 25 660 20 Q700 20 720 42 Q735 50 735 30 L740 0 M600 138 L598 110 L660 95 Q685 80 695 110 L750 95 Q765 110 770 138 M615 138 L625 120 L680 112 M735 138 L750 120',
  'M890 15 Q840 40 838 75 Q845 110 910 95 Q1020 60 1080 15 M900 25 Q845 60 855 80 Q890 90 960 60 L1050 25 M895 18 L905 70 M925 92 Q950 120 1010 117 Q1070 100 1080 25 M1205 138 L1235 110 L1380 118 M1235 138 L1380 142',
  'M0 195 Q50 260 45 330 Q35 380 0 385 M0 445 Q60 450 100 462 Q140 475 152 460 M0 235 Q25 260 30 290 M0 475 Q55 540 62 620 Q60 680 20 720 M0 510 Q25 550 22 600 L0 640 M152 488 Q80 500 80 570 L85 605 Q65 595 62 600 M115 520 Q90 560 110 615 Q90 630 90 655 Q110 720 148 738 M148 632 Q120 630 120 660 L148 690 M48 705 Q90 690 110 760 L128 830 M100 832 L148 830 M0 785 Q20 800 12 880 Q62 890 58 950 Q30 1000 0 1000 M60 952 L148 935',
  'M115 990 Q122 995 128 1038 L165 1048 Q172 1060 138 1085 L135 1118 L105 1100 L60 1108 Q55 1100 70 1070 L45 1045 Q45 1030 90 1035 Z M0 1195 L148 1250 M78 1215 Q100 1165 148 1160 M105 1230 L135 1200 L148 1215 M0 1285 L148 1290 M148 1290 L25 1500 M120 1350 L148 1360',
  'M310 572 Q310 600 340 572 M365 572 L368 588 M390 572 L405 588 M430 572 L445 588 M960 572 L962 588 M995 572 L1000 588 M1285 588 L1295 572 M1325 588 L1330 565 M1105 572 Q1130 585 1155 572 M330 1025 L345 1038 M880 1025 L880 1040 M960 1038 L965 1025 M1160 1040 L1210 1025 M385 1028 Q410 1045 440 1025',
];

const leftMidDots: Dot[] = [
  [21, 15, 11], [28, 422, 17], [27, 664, 18], [138, 666, 16], [-5, 1214, 28], [50, 1308, 18], [101, 1343, 17], [150, 1280, 18],
];

const leftMidLines: string[] = [
  'M98 0 L28 118 Q20 128 0 122 M148 148 L70 168 Q45 175 46 200 L65 265 L32 335 L88 320 Q92 360 115 358 L148 350 M148 200 L110 208 Q95 215 105 232 Q115 238 148 228 M148 262 Q118 265 128 290 L148 295 M148 395 Q80 400 92 470 Q50 480 52 530 Q70 590 140 590 Q210 585 250 545 M240 112 L385 95 M350 540 Q370 555 410 540 M125 750 Q140 760 148 785 M125 750 L108 790 L68 802 Q75 820 95 828 L92 865 L148 852 M0 790 L20 880 Q18 910 0 915 M148 935 L90 1005 Q30 1070 20 1130 Q25 1150 45 1150 L148 1125 M105 1000 Q130 965 155 962 M90 1148 Q105 1195 148 1205 M148 1032 L120 1045 Q110 1055 130 1062 L148 1055 M0 1495 Q5 1450 30 1435 L148 1402 M52 1440 Q60 1510 90 1568 M78 1435 Q85 1500 115 1560 M300 990 L312 1008 M380 1008 L388 990 M360 1340 Q385 1335 400 1355 M0 1495 L20 1568',
];

const leftLowDots: Dot[] = [
  [52, 134, 17], [56, 500, 24], [28, 577, 24], [82, 668, 18], [85, 971, 16], [104, 1086, 18], [150, 1040, 20], [347, 165, 16],
];

const leftLowLines: string[] = [
  'M12 0 Q20 45 55 40 L125 22 Q145 10 145 0 M75 0 L90 25 M105 0 L115 20 M128 22 Q125 120 140 180 L148 285 M148 210 Q90 215 90 250 L105 325 Q115 345 148 348 M0 318 Q60 325 60 375 Q45 430 0 442 M148 465 L142 475 L125 585 L148 585 M0 682 Q20 680 28 700 L82 840 Q80 860 60 868 L0 892 M205 488 L220 505 M430 500 L475 498 M148 880 L112 885 L148 930 L138 975 L148 985 M180 848 Q200 820 212 848 M300 848 Q325 825 350 848 M395 848 L400 830 M0 960 Q15 950 22 965 L18 1040 Q20 1140 90 1165 Q140 1175 195 1175 L205 1190 M0 1110 Q15 1150 60 1195 Q85 1220 70 1260 Q40 1320 50 1360 L75 1425 Q95 1445 148 1438 M148 1330 L128 1322 L125 1385 L148 1382 M0 1495 L380 1535 Q415 1545 418 1556 M0 1548 L50 1556 M315 1190 L318 1175',
];

function Wallpaper() {
  return (
    <svg
      aria-hidden="true"
      viewBox="0 0 1080 1516"
      preserveAspectRatio="xMidYMin slice"
      className="absolute inset-0 h-full w-full"
      fill="none"
      stroke="#172a32"
      strokeWidth="3"
      strokeLinecap="round"
      strokeLinejoin="round"
    >
      <g transform="scale(.33333)">
        <Dots items={leftTopDots} ratio={1} />
        <Lines items={leftTopLines} />
      </g>
      <g transform="translate(0 460) scale(.33333 .338)">
        <Dots items={leftMidDots} ratio={1} />
        <Lines items={leftMidLines} />
      </g>
      <g transform="translate(0 980) scale(.33333 .3444)">
        <Dots items={leftLowDots} ratio={1} />
        <Lines items={leftLowLines} />
      </g>
      <g transform="translate(440 0) scale(.40816 .33333)">
        <Dots items={upperDots} ratio={0.8} />
        <Lines items={upperLines} />
      </g>
      <g transform="translate(440 460) scale(.40816 .33333)">
        <Dots items={middleDots} ratio={0.8} />
        <Lines items={middleLines} />
      </g>
      <g transform="translate(440 920) scale(.40816 .38265)">
        <Dots items={lowerDots} ratio={0.94} />
        <Lines items={lowerLines} />
      </g>
      <g fontFamily="Roboto, sans-serif" fontWeight="700">
        <text x="964" y="69" fontSize="84" transform="rotate(-10 964 69)">24</text>
        <text x="674" y="1510" fontSize="62">Hi</text>
      </g>
    </svg>
  );
}

/* ---------- Messages ---------- */

type Message = { kind: 'edit' | 'thinking' | 'cross'; time: string };

const messages: Message[] = [
  ...Array.from({ length: 5 }, (): Message => ({ kind: 'edit', time: '17:38' })),
  { kind: 'thinking', time: '17:51' },
  ...Array.from({ length: 5 }, (): Message => ({ kind: 'cross', time: '17:57' })),
];

function MessageBody({ kind }: { kind: Message['kind'] }) {
  if (kind === 'edit') {
    return (
      <p className="pt-3.5 pb-[17px]">
        #trava zap
        <br />
        #Edit... {BOX3}
      </p>
    );
  }
  if (kind === 'thinking') {
    return (
      <p className="flex items-center gap-4 pt-[22px] pb-6">
        <ThinkingFace />
        <span>Você caiu... {BOX3}</span>
      </p>
    );
  }
  return (
    <p className="flex items-center gap-1.5 pt-[22px] pb-6">
      <CrossMark />
      <CrossMark />
      <span>... {BOX3}</span>
    </p>
  );
}

function Bubble({ message, first }: { message: Message; first: boolean }) {
  return (
    <li
      className={
        first
          ? 'relative ml-[51px] flex w-fit items-end gap-[42px] rounded-[20px] rounded-tl-none bg-[#040507] pr-[18px] pl-[26px] shadow-[0_1px_1px_#03090d]'
          : 'relative ml-[49px] flex w-fit items-end gap-[42px] rounded-[20px] bg-[#040507] pr-[21px] pl-[28px] shadow-[0_1px_1px_#03090d]'
      }
    >
      {first && (
        <svg aria-hidden="true" viewBox="0 0 21 32" className="absolute top-0 -left-5 h-8 w-[21px]" fill="#040507">
          <path d="M21 0 H5 Q-1 1 0 8 Q1 10 3 12 L20 32 H21 Z" />
        </svg>
      )}
      <MessageBody kind={message.kind} />
      <time className="pb-2.5 text-[36px] leading-[42px] text-[#8f9092]">{message.time}</time>
    </li>
  );
}

/* ---------- Page ---------- */

export default function App() {
  return (
    <div className="flex min-h-screen flex-col bg-black font-[Roboto,sans-serif] text-white">
      <header className="bg-[#0a0a0a]">
        <div className="flex h-[72px] items-center justify-end pr-6">
          <svg aria-hidden="true" viewBox="0 0 53 43" className="mr-[19px] h-[43px] w-[53px]" fill="#fff">
            <path d="M0 10 Q26 -10 53 10 L26.500 43 Z" />
          </svg>
          <svg aria-hidden="true" viewBox="0 0 40 42" className="mr-[26px] h-[42px] w-10" fill="#545454">
            <path d="M11 6 L16 0 H32 Q36 0 36 4 V30 Z M6 11 L34 40 H9 Q5 40 5 36 V10 Z" />
            <path d="M1 3 L39 41" stroke="#545454" strokeWidth="3" />
          </svg>
          <svg aria-hidden="true" viewBox="0 0 28 44" className="mr-[22px] h-11 w-7" fill="#fff">
            <path d="M7 0 H21 V4 H28 V44 H0 V4 H7 Z" />
            <path d="M10 10 H20 L16 21 H21 L8 39 L12 25 H7 Z" fill="#0a0a0a" />
          </svg>
          <time className="pt-1 text-[42px] leading-none font-medium">08:08</time>
        </div>
        <div className="flex h-[168px] items-center pr-[60px] pl-6">
          <button type="button" aria-label="Voltar" className="mr-3">
            <svg viewBox="0 0 48 48" className="h-12 w-12" fill="none" stroke="#fff" strokeWidth="6">
              <path d="M26 2 L4 24 L26 46 M4 24 H48" />
            </svg>
          </button>
          <Avatar />
          <h1 className="ml-6 flex-1 text-[54px] leading-none font-medium">PÉDOFILO</h1>
          <button type="button" aria-label="Chamada de vídeo" className="mr-[86px]">
            <svg viewBox="0 0 62 38" className="h-[38px] w-[62px]" fill="#fff">
              <rect width="44" height="38" rx="5" />
              <path d="M47 15 Q47 13 49 11 L58 5 Q62 3 62 7 V31 Q62 35 58 33 L49 27 Q47 25 47 23 Z" />
            </svg>
          </button>
          <button type="button" aria-label="Ligar" className="mr-[93px]">
            <svg viewBox="3 3 18 18" className="h-[54px] w-[54px]" fill="#fff">
              <path d="M6.620 10.790c1.440 2.830 3.760 5.140 6.590 6.590l2.200-2.200c.27-.27.67-.36 1.020-.24 1.120.37 2.330.57 3.570.57.55 0 1 .45 1 1V20c0 .55-.45 1-1 1-9.390 0-17-7.610-17-17 0-.55.45-1 1-1h3.500c.55 0 1 .45 1 1 0 1.250.2 2.450.57 3.570.11.35.03.74-.25 1.020l-2.200 2.200z" />
            </svg>
          </button>
          <button type="button" aria-label="Mais opções">
            <svg viewBox="0 0 12 48" className="h-12 w-3" fill="#fff">
              <circle cx="6" cy="6" r="6" />
              <circle cx="6" cy="24" r="6" />
              <circle cx="6" cy="42" r="6" />
            </svg>
          </button>
        </div>
      </header>

      <main className="relative flex-1 overflow-hidden bg-[#06171f]">
        <Wallpaper />
        <div className="relative flex h-[9px] items-end justify-center overflow-hidden">
          <div className="h-16 w-[43%] shrink-0 rounded-[20px] bg-[#1e272c]" />
        </div>
        <ul className="relative flex flex-col gap-1.5 pt-9 pb-3.5 text-[48px] leading-[57px]">
          {messages.map((message, i) => (
            <Bubble key={i} message={message} first={i === 0} />
          ))}
        </ul>
        <div className="absolute inset-x-0 top-0 h-4 bg-linear-to-b from-black/30 to-transparent" />
      </main>

      <footer className="flex h-[164px] items-center bg-black pr-[47px] pb-0.5 pl-[46px]">
        <button type="button" aria-label="Anexar" className="mr-[47px]">
          <svg viewBox="0 0 63 58" className="h-[58px] w-[63px]" fill="none" stroke="#fff" strokeWidth="5" strokeLinecap="round" strokeLinejoin="round">
            <path d="M34 6 L56 29 Q64 39 56 49 Q46 59 35 51 L6 22 Q-1 14 5 7 Q12 0 20 6 L43 29 Q48 35 43 39 Q38 43 33 38 L20 21" />
          </svg>
        </button>
        <div className="relative flex-1">
          <input
            aria-label="Mensagem"
            defaultValue={`${BOX3} - ${BOX.repeat(7)}`}
            className="block h-16 w-full bg-transparent pl-3 text-[54px] outline-none"
          />
          <div className="absolute inset-x-0 bottom-1.5 h-[7px] bg-white" />
          <div className="absolute -top-1.5 left-3 h-[73px] w-1.5 bg-white" />
        </div>
        <button type="button" aria-label="Emoji" className="ml-12">
          <svg viewBox="0 0 61 61" className="h-[61px] w-[61px]">
            <circle cx="30.500" cy="30.500" r="30.500" fill="#fff" />
            <ellipse cx="21" cy="22" rx="4.500" ry="6" />
            <ellipse cx="40" cy="22" rx="4.500" ry="6" />
            <path d="M11 33 Q30 37 50 33 Q47 51 30 51 Q14 51 11 33 Z" />
            <path d="M15 37 Q30 40 46 37 Q42 43 30 43 Q19 43 15 37 Z" fill="#fff" />
          </svg>
        </button>
        <button type="button" aria-label="Câmera" className="ml-[83px]">
          <svg viewBox="0 0 59 56" className="h-14 w-[59px]">
            <path
              d="M0 20 Q0 10 10 8 L14 7.500 Q17 7 19 3 Q21 0 25 0 H34 Q38 0 40 3 Q43 7 46 8 L49 8 Q59 10 59 20 V45 Q59 56 48 56 H11 Q0 56 0 45 Z"
              fill="#fff"
            />
            <circle cx="29.500" cy="29.500" r="12.500" fill="#fff" stroke="#000" strokeWidth="5" />
          </svg>
        </button>
        <button type="button" aria-label="Gravar áudio" className="ml-[81px]">
          <svg viewBox="0 0 44 61" className="h-[61px] w-11" fill="none" stroke="#fff" strokeLinecap="round">
            <rect x="13" y="0" width="18" height="36" rx="9" fill="#fff" stroke="none" />
            <path d="M3 30 Q5 47 22 47 Q39 47 41 30 M22 48 V58" strokeWidth="6" />
          </svg>
        </button>
      </footer>
    </div>
  );
}
